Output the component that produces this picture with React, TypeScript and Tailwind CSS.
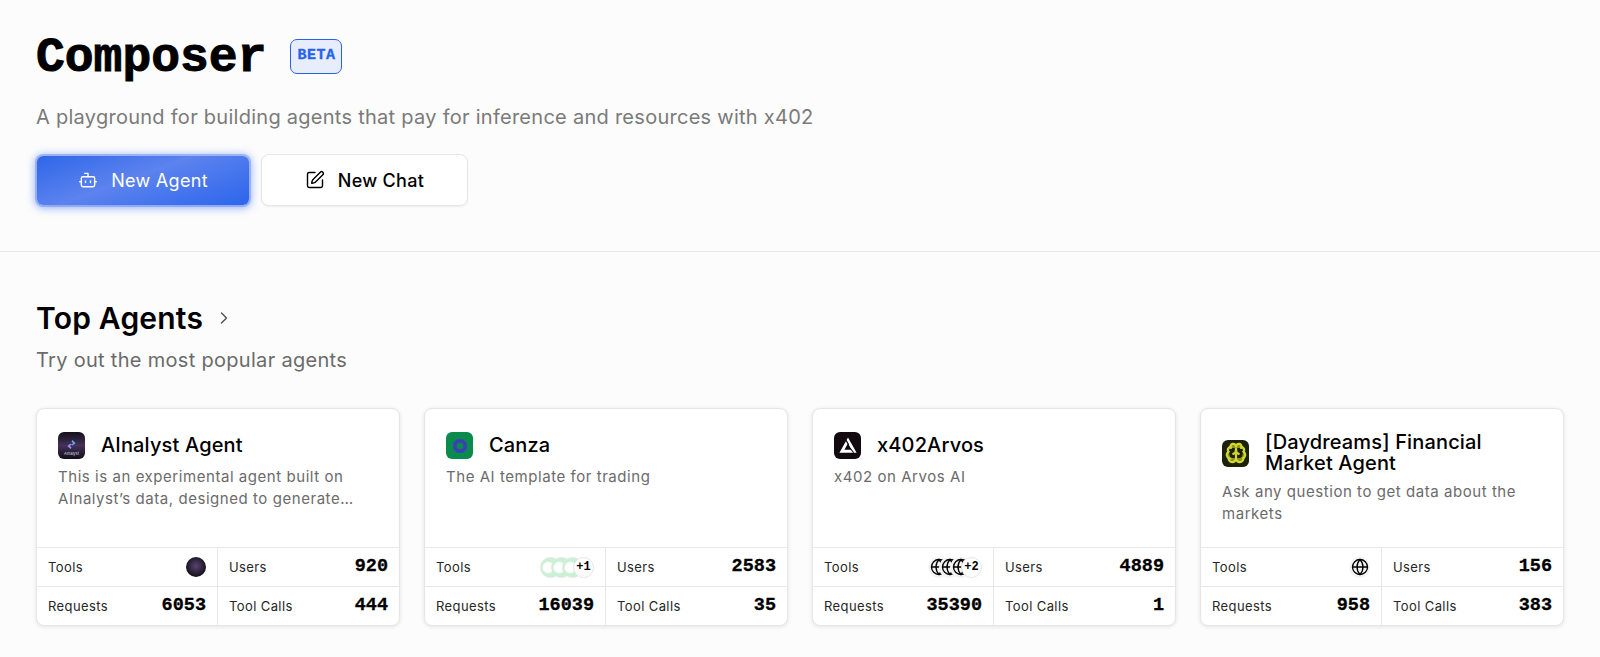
import { Bot, Brain, ChevronRight, Globe, SquarePen } from 'lucide-react';
import type { ReactNode } from 'react';

const SANS = "font-['Inter','Liberation_Sans',sans-serif]";
const MONO = "font-['Liberation_Mono',monospace]";

function AnalystLogo() {
  return (
    <div className="flex h-[27px] w-[27px] shrink-0 flex-col items-center justify-end rounded-[6px] bg-gradient-to-b from-[#14101c] via-[#43325a] to-[#120e18] pb-[3px]">
      <svg viewBox="0 0 12 12" className="mb-[2px] h-[11px] w-[11px]">
        <path d="M7 1 10.5 4.5 7 7 5.8 5.6 8 4.5 6 3Z" fill="#60a5fa" />
        <path d="M5 5 6.2 6.4 4 7.5 6 9 5 11 1.5 7.5Z" fill="#a78bfa" />
      </svg>
      <span className="text-[4px] leading-[4px] text-[#d4d4e8]">AInalyst</span>
    </div>
  );
}

function CanzaLogo() {
  return (
    <div className="flex h-[27px] w-[27px] shrink-0 items-center justify-center rounded-[6px] bg-[#0a8a4c]">
      <svg viewBox="0 0 16 16" className="h-[16px] w-[16px]">
        <path d="M5.7 3h4.6L13 5.7v4.6L10.3 13H5.7L3 10.3V5.7Z" fill="none" stroke="#3a3fb8" strokeWidth="3.6" />
      </svg>
    </div>
  );
}

function ArvosLogo() {
  return (
    <div className="flex h-[27px] w-[27px] shrink-0 items-center justify-center rounded-[6px] bg-[#120a0e]">
      <svg viewBox="0 0 16 16" className="h-[18px] w-[18px]">
        <path d="M8 3 13.4 12.6H2.6Z" fill="none" stroke="#fff" strokeWidth="2.6" strokeLinejoin="miter" />
        <path d="M6.2 2.8 8.6 7" stroke="#120a0e" strokeWidth="1" />
        <path d="M13 14 10 10" stroke="#120a0e" strokeWidth="1" />
      </svg>
    </div>
  );
}

function BrainLogo() {
  return (
    <div className="flex h-[27px] w-[27px] shrink-0 items-center justify-center rounded-[6px] bg-[#1c2208]">
      <Brain size={22} strokeWidth={2.4} className="fill-[#8f9420] text-[#d4d82e]" />
    </div>
  );
}

function StripedChip() {
  return (
    <div className="-ml-[10px] h-[21px] w-[21px] rounded-full border border-[#e5e5e5] bg-[radial-gradient(circle_at_38%_50%,#ffffff_0_32%,#c8f2d2_42%)] first:ml-0" />
  );
}

function GlobeChip() {
  return (
    <div className="-ml-[10px] flex h-[21px] w-[21px] items-center justify-center rounded-full bg-[#f3f3f3] first:ml-0">
      <Globe size={18} strokeWidth={1.8} className="text-black" />
    </div>
  );
}

function MoreChip({ count }: { count: number }) {
  return (
    <div className={`${MONO} -ml-[10px] flex h-[21px] w-[21px] items-center justify-center rounded-full border border-[#e5e5e5] bg-white text-[12px] font-bold text-black`}>
      +{count}
    </div>
  );
}

function Stat({ label, children, right, bottom }: { label: string; children: ReactNode; right?: boolean; bottom?: boolean }) {
  return (
    <div className={`flex items-center justify-between pt-[1px] pr-[11px] pl-[11px] ${right ? '' : 'border-r border-[#e8e8e8]'} ${bottom ? '' : 'border-b border-[#e8e8e8]'}`}>
      <span className="text-[13px] tracking-[0.4px] text-[#262626]">{label}</span>
      {children}
    </div>
  );
}

function Num({ value }: { value: number }) {
  return <span className={`${MONO} text-[18.5px] font-bold text-black [-webkit-text-stroke:0.3px_black]`}>{value}</span>;
}

function AgentCard({
  logo,
  name,
  description,
  tools,
  users,
  requests,
  toolCalls,
}: {
  logo: ReactNode;
  name: ReactNode;
  description: ReactNode;
  tools: ReactNode;
  users: number;
  requests: number;
  toolCalls: number;
}) {
  return (
    <div className="flex h-[218px] flex-col overflow-hidden rounded-[8px] border border-[#e6e6e6] bg-white shadow-[0_1px_4px_rgba(0,0,0,0.10)]">
      <div className="h-[138px] px-[21px] pt-[23px]">
        <div className="flex min-h-[27px] items-center gap-[16px]">
          {logo}
          <h3 className="text-[20px] leading-[21px] font-medium tracking-[0.15px] text-black">{name}</h3>
        </div>
        <p className="mt-[7px] text-[15px] leading-[22px] tracking-[0.55px] text-[#6b6b6b]">{description}</p>
      </div>
      <div className="grid flex-1 grid-cols-2 grid-rows-2 border-t border-[#e8e8e8]">
        <Stat label="Tools">{tools}</Stat>
        <Stat label="Users" right>
          <Num value={users} />
        </Stat>
        <Stat label="Requests" bottom>
          <Num value={requests} />
        </Stat>
        <Stat label="Tool Calls" right bottom>
          <Num value={toolCalls} />
        </Stat>
      </div>
    </div>
  );
}

export default function App() {
  return (
    <div className={`${SANS} h-[657px] overflow-hidden bg-[#fcfcfc]`}>
      <header className="h-[252px] border-b border-[#e8e8e8] px-9 pt-[28px]">
        <div className="flex h-[56px] items-center gap-[24px]">
          <h1 className={`${MONO} mt-[3px] text-[48px] leading-[56px] font-bold text-black [-webkit-text-stroke:1px_black]`}>Composer</h1>
          <span className={`${MONO} flex h-[35px] w-[52px] items-center justify-center rounded-[7px] border border-[#2563eb] bg-[#e8edfb] text-[15px] font-bold tracking-[0.5px] text-[#2563eb] [-webkit-text-stroke:0.3px_#2563eb]`}>
            BETA
          </span>
        </div>
        <p className="mt-[19px] text-[20px] leading-[28px] tracking-[0.27px] text-[#7a7a7a]">
          A playground for building agents that pay for inference and resources with x402
        </p>
        <div className="mt-[23px] ml-[1px] flex items-center gap-[12px]">
          <button className="flex h-[49px] w-[212px] items-center justify-center gap-[13px] rounded-[6px] bg-[linear-gradient(160deg,#2f66e8_0%,#5c83ee_45%,#2c65ec_100%)] text-[18px] tracking-[0.3px] text-white shadow-[0_0_0_2px_rgba(90,130,240,0.4),0_1px_9px_2px_rgba(60,110,240,0.55)]">
            <Bot size={20} strokeWidth={1.7} />
            New Agent
          </button>
          <button className="flex h-[52px] w-[207px] items-center justify-center gap-[13px] rounded-[8px] border border-[#e6e6e6] bg-white text-[18px] font-medium tracking-[0.3px] text-black shadow-[0_1px_2px_rgba(0,0,0,0.06)]">
            <SquarePen size={20} strokeWidth={1.7} />
            New Chat
          </button>
        </div>
      </header>
      <section className="px-9 pt-[46px]">
        <div className="flex h-[40px] items-center gap-[11px]">
          <h2 className="text-[30px] leading-[40px] font-semibold tracking-[0.2px] text-black">Top Agents</h2>
          <ChevronRight size={20} strokeWidth={1.7} className="text-[#525252]" />
        </div>
        <p className="mt-[8px] text-[20px] leading-[28px] tracking-[0.3px] text-[#6b6b6b]">Try out the most popular agents</p>
        <div className="mt-[34px] grid grid-cols-4 gap-[24px]">
          <AgentCard
            logo={<AnalystLogo />}
            name="AInalyst Agent"
            description={<>This is an experimental agent built on AInalyst’s data, designed to generate…</>}
            tools={
              <div className="h-[20px] w-[20px] rounded-full bg-[radial-gradient(circle_at_50%_45%,#5a4470,#0c0a12_80%)]" />
            }
            users={920}
            requests={6053}
            toolCalls={444}
          />
          <AgentCard
            logo={<CanzaLogo />}
            name="Canza"
            description="The AI template for trading"
            tools={
              <div className="flex items-center">
                <StripedChip />
                <StripedChip />
                <StripedChip />
                <MoreChip count={1} />
              </div>
            }
            users={2583}
            requests={16039}
            toolCalls={35}
          />
          <AgentCard
            logo={<ArvosLogo />}
            name="x402Arvos"
            description="x402 on Arvos AI"
            tools={
              <div className="flex items-center">
                <GlobeChip />
                <GlobeChip />
                <GlobeChip />
                <MoreChip count={2} />
              </div>
            }
            users={4889}
            requests={35390}
            toolCalls={1}
          />
          <AgentCard
            logo={<BrainLogo />}
            name="[Daydreams] Financial Market Agent"
            description="Ask any question to get data about the markets"
            tools={<GlobeChip />}
            users={156}
            requests={958}
            toolCalls={383}
          />
        </div>
      </section>
    </div>
  );
}
